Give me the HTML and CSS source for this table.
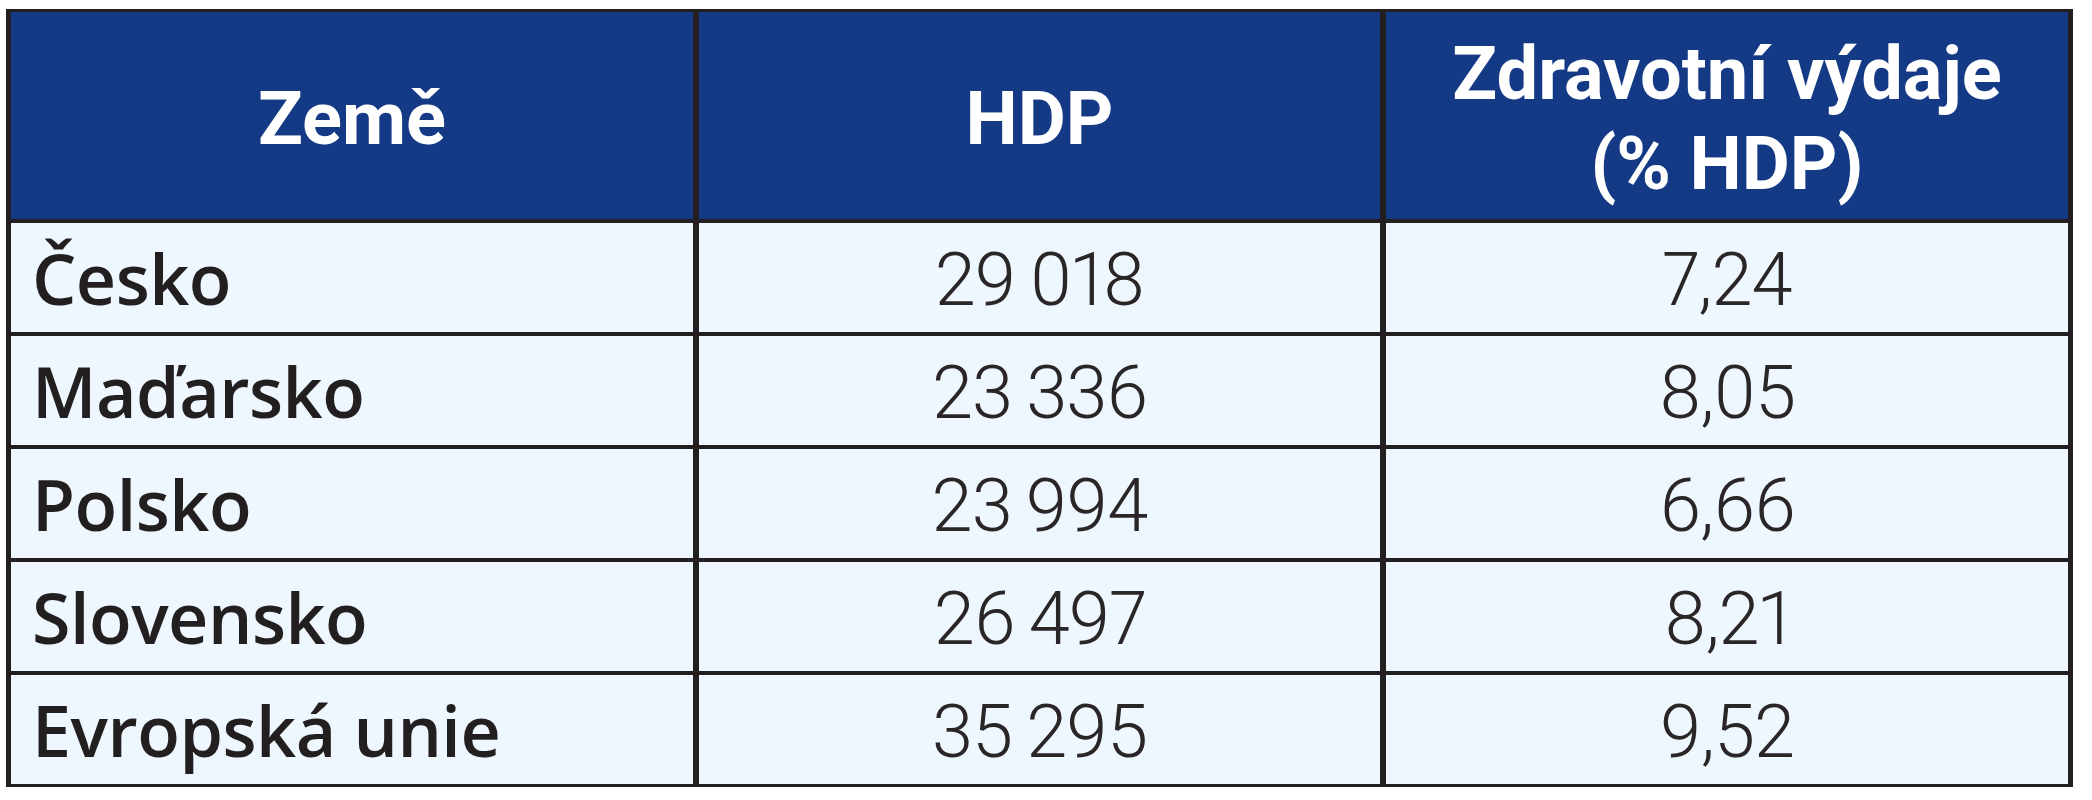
FILE: index.html
```html
<!DOCTYPE html>
<html lang="cs">
<head>
<meta charset="utf-8">
<title>Tabulka</title>
<link rel="stylesheet" href="styles.css">
</head>
<body>
<div class="wrap">
  <div class="grid">
    <div class="th">Země</div>
    <div class="th">HDP</div>
    <div class="th">Zdravotní výdaje<br>(% HDP)</div>

    <div class="td name">Česko</div>
    <div class="td num">29&#8201;018</div>
    <div class="td num">7,24</div>

    <div class="td name">Maďarsko</div>
    <div class="td num">23&#8201;336</div>
    <div class="td num">8,05</div>

    <div class="td name">Polsko</div>
    <div class="td num">23&#8201;994</div>
    <div class="td num">6,66</div>

    <div class="td name">Slovensko</div>
    <div class="td num">26&#8201;497</div>
    <div class="td num">8,21</div>

    <div class="td name">Evropská unie</div>
    <div class="td num">35&#8201;295</div>
    <div class="td num">9,52</div>
  </div>
</div>
</body>
</html>
```

FILE: styles.css
```css
html, body {
  margin: 0;
  padding: 0;
  background: #ffffff;
}

.wrap {
  padding: 9px 0 0 6px;
}

.grid {
  display: grid;
  width: max-content;
  grid-template-columns: 682px 681px 682px;
  grid-template-rows: 207px repeat(5, 109px);
  column-gap: 6px;
  row-gap: 4px;
  padding: 3px 5px 3px 5px;
  background: #231f20;
}

.th {
  background: #143985;
  color: #ffffff;
  font-family: Roboto, "Liberation Sans", sans-serif;
  font-weight: 700;
  font-size: 74px;
  line-height: 90px;
  display: flex;
  align-items: center;
  justify-content: center;
  text-align: center;
  padding-top: 6px;
  box-sizing: border-box;
}

.td {
  background: #eef6fe;
  color: #231f20;
  display: flex;
  align-items: center;
}

.name {
  font-family: "Open Sans", "Noto Sans", sans-serif;
  font-weight: 600;
  font-size: 70px;
  padding-left: 21px;
  letter-spacing: -0.5px;
}

.num {
  justify-content: center;
  font-family: Roboto, "Liberation Sans", sans-serif;
  font-weight: 300;
  font-size: 74px;
  letter-spacing: -1px;
  font-variant-numeric: proportional-nums;
  color: #2a2627;
  padding-top: 4px;
  box-sizing: border-box;
}
```
